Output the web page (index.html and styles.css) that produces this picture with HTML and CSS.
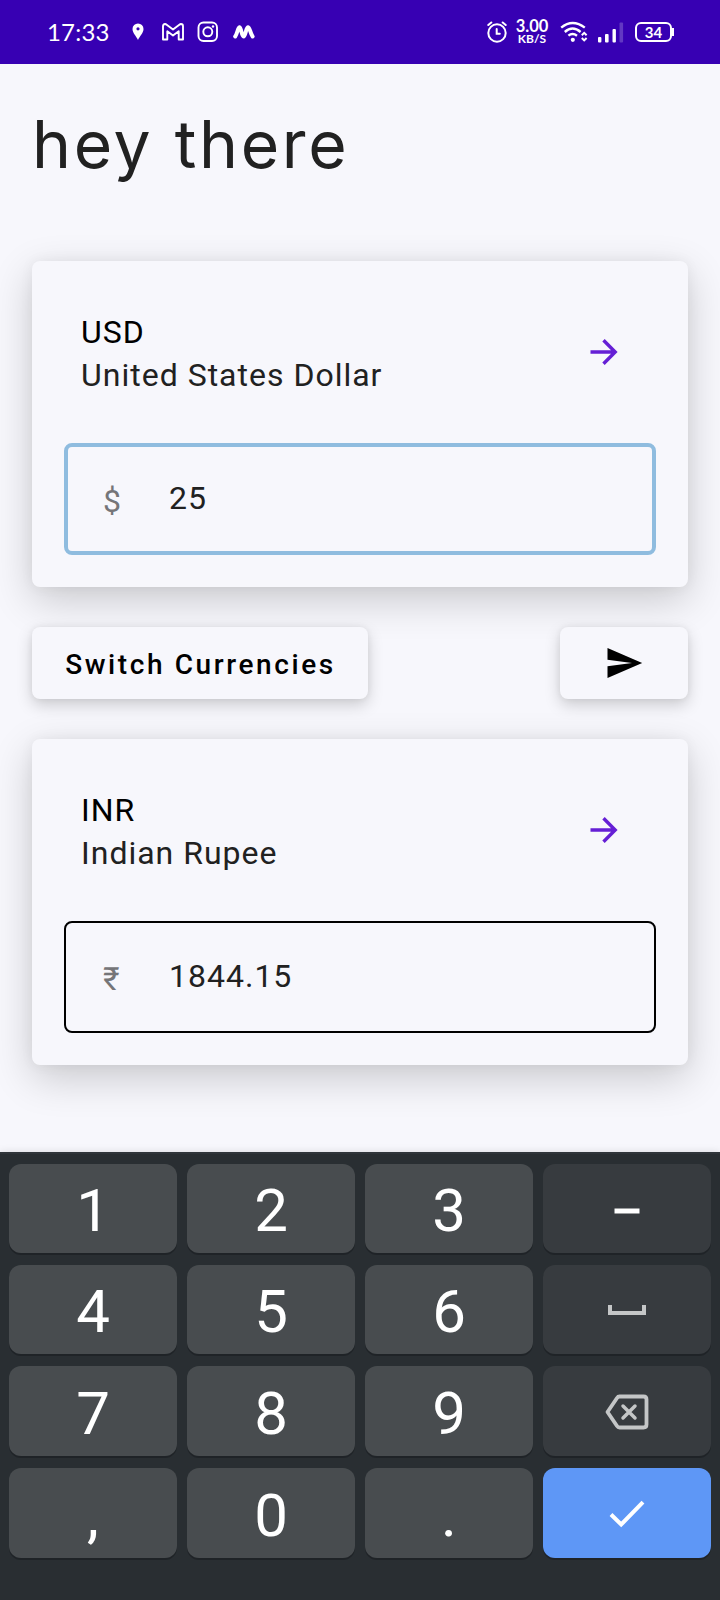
FILE: index.html
```html
<!DOCTYPE html>
<html lang="en">
<head>
<meta charset="utf-8">
<title>Currency converter</title>
<link rel="stylesheet" href="styles.css">
</head>
<body>
<div class="screen">
  <header class="status">
    <div class="status-left">
      <span class="clock">17:33</span>
      <svg class="icon pin" width="12" height="18" viewBox="0 0 12 18"><path fill="#fff" fill-rule="evenodd" d="M6 .5A5.5 5.5 0 0 0 .5 6C.5 10 4.200 13 6 17 7.800 13 11.500 10 11.500 6A5.500 5.500 0 0 0 6 .5ZM6 4.200A1.600 1.600 0 1 1 6 7.400 1.600 1.600 0 0 1 6 4.200Z"/></svg>
      <svg class="icon mail" width="22" height="18" viewBox="0 0 22 18"><path fill="none" stroke="#fff" stroke-width="1.900" stroke-linejoin="round" d="M1 3.200Q1 1 3 1L4 1.200 11 6.600 18 1.200 19 1Q21 1 21 3.200V16.500H16.700V8.300L11 12.600 5.300 8.300V16.500H1Z"/></svg>
      <svg class="icon camera" width="22" height="22" viewBox="0 0 22 22" fill="none" stroke="#fff" stroke-width="1.900"><rect x="1.500" y="1.500" width="18.500" height="18.500" rx="5"/><circle cx="10.800" cy="10.800" r="4.500"/><circle cx="16" cy="5.500" r="1.200" fill="#fff" stroke="none"/></svg>
      <svg class="icon wave" width="22" height="16" viewBox="0 0 22 16"><path d="M2.200 12.500C4.500 9.500 4.800 3.500 6.500 3.200 8.500 3.500 8.500 12.500 10.500 12.500 12.700 12.500 12.800 3.500 15 3.200 17 3.500 17.200 9.500 19.600 12.500" fill="none" stroke="#fff" stroke-width="4" stroke-linecap="round" stroke-linejoin="round"/></svg>
    </div>
    <div class="status-right">
      <svg class="icon" width="20" height="22" viewBox="0 0 20 22" fill="none" stroke="#fff" stroke-width="2" stroke-linecap="round"><circle cx="10" cy="12" r="8.700"/><path d="M1.300 4 4.300 1.500M18.700 4 15.700 1.500M9.700 8V12.800H12.800"/></svg>
      <div class="speed"><span class="rate">3.00</span><span class="unit">KB/S</span></div>
      <svg class="icon wifi" width="28" height="22" viewBox="0 0 28 22" fill="none" stroke="#fff" stroke-width="2.400"><path d="M1.200 6.600Q12.500-2.800 24.800 6.600M4.800 11Q12.500 4.200 20.600 11M8.400 14.700Q12.500 11.300 17 14.700"/><circle cx="12.800" cy="18.800" r="2.100" fill="#fff" stroke="none"/><path d="M21.800 14.200 24.200 11.800 26.600 14.200M21.800 17 24.200 19.400 26.600 17" stroke-width="2"/></svg>
      <svg class="icon signal" width="28" height="21" viewBox="0 0 28 21" fill="#fff"><rect x="1" y="15" width="3.400" height="5.500" rx="1"/><rect x="8" y="12" width="3.600" height="8.500" rx="1"/><rect x="15.500" y="7" width="3.400" height="13.500" rx="1"/><rect x="22.500" y=".5" width="3.600" height="20" rx="1" opacity=".22"/></svg>
      <div class="battery"><span class="level">34</span></div>
    </div>
  </header>

  <main class="content">
    <h1 class="title">hey there</h1>

    <section class="card">
      <div class="currency">
        <div class="names"><div class="code">USD</div><div class="name">United States Dollar</div></div>
        <svg class="arrow" width="28" height="28" viewBox="0 0 28 28"><path d="M.5 14H25M13.500 2.300 25.200 14 13.500 25.700" fill="none" stroke="#651fd5" stroke-width="3.400"/></svg>
      </div>
      <div class="field focused"><span class="symbol">$</span><span class="amount">25</span></div>
    </section>

    <div class="actions">
      <button class="button switch">Switch Currencies</button>
      <button class="button send" aria-label="Convert"><svg width="36" height="32" viewBox="0 0 36 32"><path d="M.5 1 35.200 16 .5 31V19.300L25 16 .5 12.700Z"/></svg></button>
    </div>

    <section class="card">
      <div class="currency">
        <div class="names"><div class="code">INR</div><div class="name">Indian Rupee</div></div>
        <svg class="arrow" width="28" height="28" viewBox="0 0 28 28"><path d="M.5 14H25M13.500 2.300 25.200 14 13.500 25.700" fill="none" stroke="#651fd5" stroke-width="3.400"/></svg>
      </div>
      <div class="field"><span class="symbol">₹</span><span class="amount">1844.15</span></div>
    </section>
  </main>

  <div class="keyboard">
    <div class="key">1</div><div class="key">2</div><div class="key">3</div>
    <div class="key dark"><svg class="dash" width="26" height="6" viewBox="0 0 26 6"><path fill="#fff" d="M.5.500H25.500V5.500H.5Z"/></svg></div>
    <div class="key">4</div><div class="key">5</div><div class="key">6</div>
    <div class="key dark"><svg width="40" height="12" viewBox="0 0 40 12"><path d="M3 1V9H37V1" fill="none" stroke="#c4c6c7" stroke-width="4"/></svg></div>
    <div class="key">7</div><div class="key">8</div><div class="key">9</div>
    <div class="key dark"><svg class="erase" width="44" height="36" viewBox="0 0 44 36" fill="none" stroke="#c4c6c7" stroke-width="3.800" stroke-linejoin="round" stroke-linecap="round"><path d="M14.500 2.500H38.500Q41.500 2.500 41.500 5.500V30.500Q41.500 33.500 38.500 33.500H14.500Q13 33.500 12 32L2.500 18 12 4Q13 2.500 14.500 2.500Z"/><path d="M18 12 30 24M30 12 18 24" stroke-width="3.500"/></svg></div>
    <div class="key">,</div><div class="key">0</div><div class="key">.</div>
    <div class="key enter"><svg width="36" height="28" viewBox="0 0 36 28"><path d="M2 14.500 12.200 24.500 34 2.200" fill="none" stroke="#fff" stroke-width="4"/></svg></div>
  </div>
</div>
</body>
</html>
```
FILE: styles.css
```css
* { box-sizing: border-box; }
body { margin: 0; font-family: Roboto, "Liberation Sans", sans-serif; }
svg { display: block; flex: none; }

.screen {
  width: 720px;
  height: 1600px;
  display: flex;
  flex-direction: column;
  background: #f7f7fc;
  overflow: hidden;
}

.status {
  height: 64px;
  flex: none;
  display: flex;
  justify-content: space-between;
  padding: 0 46px 0 47px;
  background: #3700b3;
  color: #fff;
}
.status-left, .status-right { display: flex; align-items: center; }
.clock {
  width: 85px;
  font: 400 24px/62px Lato, sans-serif;
  letter-spacing: 0.2px;
}
.mail { margin-left: 18px; }
.camera { margin-left: 13px; }
.wave { margin-left: 14px; }
.speed {
  width: 36px;
  margin-left: 7px;
  display: flex;
  flex-direction: column;
  align-items: center;
  font-family: Lato, sans-serif;
  font-weight: 700;
  white-space: nowrap;
}
.rate { font-size: 16.5px; line-height: 14px; }
.unit { font-size: 12px; line-height: 12px; }
.wifi { margin-left: 10px; }
.signal { margin-left: 9px; }
.battery {
  position: relative;
  width: 37px;
  height: 20px;
  margin: 0 2px 0 10px;
  border: 2px solid #fff;
  border-radius: 6px;
  text-align: center;
}
.battery::after {
  content: "";
  position: absolute;
  right: -4px;
  top: 4px;
  width: 2px;
  height: 8px;
  background: #fff;
}
.level { display: block; font: 700 15px/16px Lato, sans-serif; }

.content { flex: none; height: 1088px; padding: 0 32px; }
.title {
  margin: 0;
  height: 197px;
  padding: 32px 0 0 0;
  font: 400 66px/96px Inter, sans-serif;
  letter-spacing: 2.7px;
  color: #212121;
}

.card {
  height: 326px;
  padding: 32px;
  border-radius: 8px;
  background: #f7f7fc;
  box-shadow: 0 13px 40px rgba(0, 0, 0, 0.19), 0 0 14px rgba(0, 0, 0, 0.05);
}
.currency {
  height: 150px;
  padding: 18px 38px 0 17px;
  display: flex;
  justify-content: space-between;
  font-size: 32px;
  line-height: 43px;
  letter-spacing: 1px;
}
.code { color: #000; }
.name { color: #212121; }
.arrow { margin-top: 27px; }
.field {
  height: 112px;
  display: flex;
  border: 2px solid #000;
  border-radius: 8px;
  padding: 2px;
  font-size: 32px;
  letter-spacing: 1px;
}
.focused { border: 4px solid #8fbcdf; padding: 0; }
.symbol { width: 101px; padding-left: 35px; line-height: 108px; color: #757578; }
.amount { line-height: 102px; color: #212121; }

.actions {
  height: 72px;
  margin: 40px 0;
  display: flex;
  justify-content: space-between;
}
.button {
  height: 72px;
  padding: 0;
  border: 0;
  border-radius: 8px;
  background: #f7f7fc;
  box-shadow: 0 6px 16px rgba(0, 0, 0, 0.18), 0 0 6px rgba(0, 0, 0, 0.06);
  color: #000;
}
.switch { width: 336px; padding: 3px 0 0 1px; font: 500 28px/69px Roboto, sans-serif; letter-spacing: 2.6px; }
.send { width: 128px; padding-left: 47px; }

.keyboard {
  position: relative;
  flex: 1;
  display: grid;
  grid-template-columns: repeat(4, 168px);
  grid-template-rows: 89px 89px 90px 90px;
  gap: 12px 10px;
  padding: 10px 9px 0;
  border-top: 2px solid #30353a;
  background: #292e32;
  box-shadow: 0 0 8px rgba(0, 0, 0, 0.12);
}
.key {
  display: flex;
  align-items: center;
  justify-content: center;
  padding-top: 5px;
  border-radius: 12px;
  background: #484c4f;
  box-shadow: 0 2px 0 #1f2327;
  color: #fff;
  font-size: 60px;
  line-height: 84px;
}
.dark { padding-top: 0; background: #373b3f; }
.dash { margin-top: 4px; }
.erase { margin: 1px 1px 0 0; }
.enter { padding-top: 2px; background: #5e97f6; }
```
